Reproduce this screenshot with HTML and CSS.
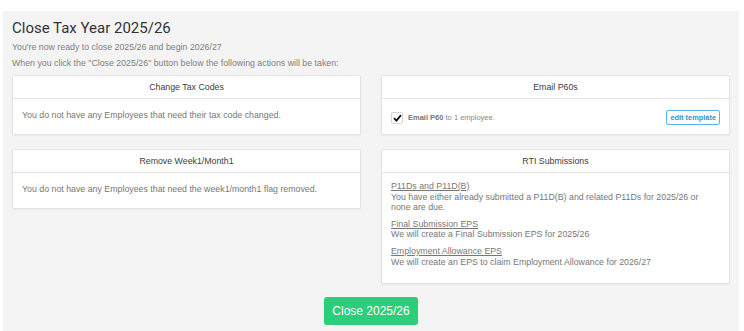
FILE: index.html
```html
<!DOCTYPE html>
<html lang="en">

<head>
    <meta charset="UTF-8">
    <meta name="viewport" content="width=device-width, initial-scale=1.0">
    <title>Close Tax Year</title>
    <link rel="stylesheet" href="styles.css">
</head>

<body>
    <div class="page">
        <div class="container">
            <h1>Close Tax Year 2025/26</h1>
            <p class="intro">You're now ready to close 2025/26 and begin 2026/27</p>
            <p class="intro">When you click the "Close 2025/26" button below the following actions will be taken:</p>

            <div class="columns">
                <div class="column">
                    <div class="card">
                        <div class="card-header">Change Tax Codes</div>
                        <div class="card-body">You do not have any Employees that need their tax code changed.</div>
                    </div>
                    <div class="card">
                        <div class="card-header">Remove Week1/Month1</div>
                        <div class="card-body">You do not have any Employees that need the week1/month1 flag removed.</div>
                    </div>
                </div>

                <div class="column">
                    <div class="card">
                        <div class="card-header">Email P60s</div>
                        <div class="card-body email">
                            <label class="check">
                                <span class="box">
                                    <svg width="9" height="8" viewBox="0 0 9 8">
                                        <path d="M1 4.2 L3.4 6.6 L8 1.2" fill="none" stroke="#111" stroke-width="1.8" />
                                    </svg>
                                </span>
                                <b>Email P60</b>&nbsp;to 1 employee.
                            </label>
                            <button class="edit">edit template</button>
                        </div>
                    </div>
                    <div class="card">
                        <div class="card-header">RTI Submissions</div>
                        <div class="card-body rti">
                            <div class="item">
                                <a href="#">P11Ds and P11D(B)</a>
                                <p>You have either already submitted a P11D(B) and related P11Ds for 2025/26 or none are due.</p>
                            </div>
                            <div class="item">
                                <a href="#">Final Submission EPS</a>
                                <p>We will create a Final Submission EPS for 2025/26</p>
                            </div>
                            <div class="item">
                                <a href="#">Employment Allowance EPS</a>
                                <p>We will create an EPS to claim Employment Allowance for 2026/27</p>
                            </div>
                        </div>
                    </div>
                </div>
            </div>

            <div class="actions">
                <button class="close-btn">Close 2025/26</button>
            </div>
        </div>
    </div>
</body>

</html>
```

FILE: styles.css
```css
/*General*/
* {
    margin: 0;
    padding: 0;
    box-sizing: border-box;
}

body {
    background-color: #fff;
    font-family: 'Liberation Sans', Arial, sans-serif;
    color: #777;
}

.page {
    padding: 11px 5px 0 3px;
}

/*Container*/
.container {
    background-color: #f4f4f4;
    padding: 7px 9px 8px 9px;
    min-height: 320px;
}

h1 {
    font-family: 'Roboto', sans-serif;
    font-weight: 400;
    font-size: 15px;
    color: #333;
    line-height: 20px;
    margin-bottom: 1px;
}

.intro {
    font-size: 8.8px;
    line-height: 16px;
    color: #808080;
}

/*Columns*/
.columns {
    display: grid;
    grid-template-columns: 1fr 1fr;
    column-gap: 20px;
    margin-top: 4px;
}

.column {
    display: flex;
    flex-direction: column;
    gap: 14px;
}

/*Card*/
.card {
    background-color: #fff;
    border: 1px solid #e4e4e4;
    border-radius: 2px;
    box-shadow: 0 1px 2px rgba(0, 0, 0, 0.05);
}

.card-header {
    text-align: center;
    font-size: 8.8px;
    color: #404040;
    height: 23px;
    line-height: 22px;
    border-bottom: 1px solid #e4e4e4;
}

.card-body {
    font-size: 8.8px;
    padding: 10px 9px 13px 9px;
    line-height: 12px;
}

/*Email*/
.card-body.email {
    display: flex;
    justify-content: space-between;
    align-items: center;
    padding: 11px 9px 9px 9px;
}

.check {
    display: flex;
    align-items: center;
    font-size: 7.5px;
    color: #888;
}

.check b {
    margin-left: 5px;
    color: #777;
}

.check .box {
    display: flex;
    align-items: center;
    justify-content: center;
    width: 12px;
    height: 12px;
    border: 1px solid #d4d4d4;
    border-radius: 2px;
    background-color: #fff;
}

.edit {
    font-family: inherit;
    font-size: 7.4px;
    font-weight: 700;
    color: #3a8fc8;
    background-color: #fff;
    border: 1px solid #5bb4e5;
    border-radius: 2px;
    padding: 2px 3px;
    line-height: 9px;
}

/*RTI*/
.card-body.rti {
    padding: 8px 9px 10px 9px;
    line-height: 10.6px;
}

.rti .item {
    margin-bottom: 6px;
}

.rti a {
    color: #777;
    text-decoration: underline;
}

/*Actions*/
.actions {
    display: flex;
    justify-content: center;
    margin-top: 13px;
}

.close-btn {
    font-family: inherit;
    font-size: 12px;
    color: #fff;
    background-color: #2bcf7b;
    border: none;
    border-radius: 3px;
    width: 94px;
    height: 28px;
}
```
